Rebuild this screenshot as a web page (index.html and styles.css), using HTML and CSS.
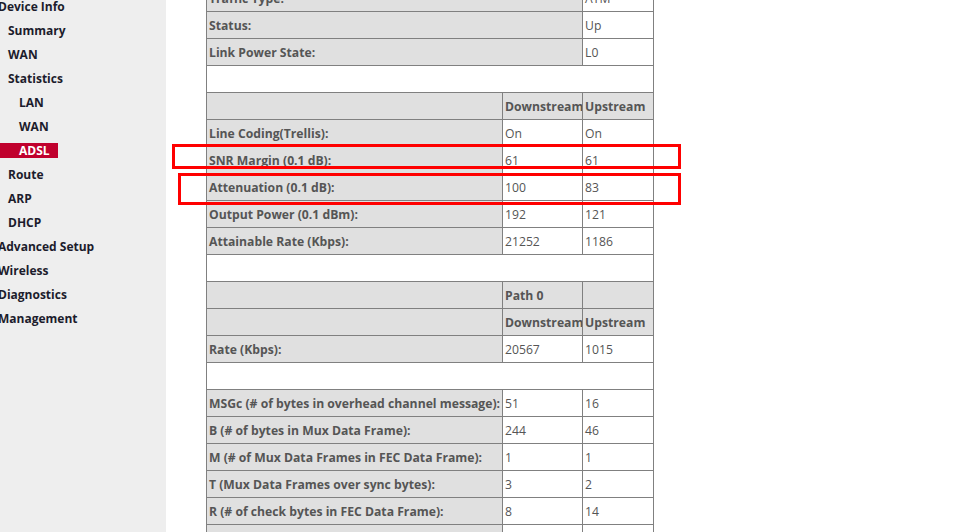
FILE: index.html
```html
<!DOCTYPE html>
<html lang="en">
<head>
  <meta charset="UTF-8">
  <title>ADSL Statistics</title>
  <link rel="stylesheet" href="styles.css">
</head>
<body>
  <div class="page">
    <div class="menu">
      <div class="m1">Device Info</div>
      <div class="m2">Summary</div>
      <div class="m2">WAN</div>
      <div class="m2">Statistics</div>
      <div class="m3">LAN</div>
      <div class="m3">WAN</div>
      <div class="m3"><span class="active">ADSL</span></div>
      <div class="m2">Route</div>
      <div class="m2">ARP</div>
      <div class="m2">DHCP</div>
      <div class="m1">Advanced Setup</div>
      <div class="m1">Wireless</div>
      <div class="m1">Diagnostics</div>
      <div class="m1">Management</div>
    </div>

    <div class="content">
      <table class="stats">
        <colgroup>
          <col class="c-label"><col class="c-down"><col class="c-up">
        </colgroup>
        <tr><td class="hd" colspan="2">Traffic Type:</td><td>ATM</td></tr>
        <tr><td class="hd" colspan="2">Status:</td><td>Up</td></tr>
        <tr><td class="hd" colspan="2">Link Power State:</td><td>L0</td></tr>
        <tr><td class="gap" colspan="3"></td></tr>
        <tr><td class="hd"></td><td class="hd">Downstream</td><td class="hd">Upstream</td></tr>
        <tr><td class="hd">Line Coding(Trellis):</td><td>On</td><td>On</td></tr>
        <tr><td class="hd">SNR Margin (0.1 dB):</td><td>61</td><td>61</td></tr>
        <tr><td class="hd">Attenuation (0.1 dB):</td><td>100</td><td>83</td></tr>
        <tr><td class="hd">Output Power (0.1 dBm):</td><td>192</td><td>121</td></tr>
        <tr><td class="hd">Attainable Rate (Kbps):</td><td>21252</td><td>1186</td></tr>
        <tr><td class="gap" colspan="3"></td></tr>
        <tr><td class="hd"></td><td class="hd">Path 0</td><td class="hd"></td></tr>
        <tr><td class="hd"></td><td class="hd">Downstream</td><td class="hd">Upstream</td></tr>
        <tr><td class="hd">Rate (Kbps):</td><td>20567</td><td>1015</td></tr>
        <tr><td class="gap" colspan="3"></td></tr>
        <tr><td class="hd">MSGc (# of bytes in overhead channel message):</td><td>51</td><td>16</td></tr>
        <tr><td class="hd">B (# of bytes in Mux Data Frame):</td><td>244</td><td>46</td></tr>
        <tr><td class="hd">M (# of Mux Data Frames in FEC Data Frame):</td><td>1</td><td>1</td></tr>
        <tr><td class="hd">T (Mux Data Frames over sync bytes):</td><td>3</td><td>2</td></tr>
        <tr><td class="hd">R (# of check bytes in FEC Data Frame):</td><td>8</td><td>14</td></tr>
        <tr><td class="hd">S (ratio of FEC over PMD Data Frame length):</td><td>0.2609</td><td>3.6923</td></tr>
      </table>
    </div>

    <div class="mark mark-snr"></div>
    <div class="mark mark-att"></div>
  </div>
</body>
</html>
```

FILE: styles.css
```css
html, body { margin: 0; padding: 0; background: #fff; overflow: hidden; }
body { font-family: "Open Sans", "Noto Sans", sans-serif; font-size: 12.2px; color: #555; }
.page { display: flex; position: relative; height: 532px; }

.menu { width: 166px; flex: none; background: #eeeeee; margin-top: -6px; padding-top: 1px; font-weight: bold; font-size: 12px; color: #1c1c2c; }
.menu div { height: 24px; line-height: 24px; white-space: nowrap; }
.m1 { margin-left: -2px; }
.m2 { padding-left: 8px; }
.m3 { padding-left: 19px; }
.m3 .active { display: inline-block; background: #c0002d; color: #fff; margin-left: -19px; padding-left: 19px; width: 39px; line-height: 15px; height: 15px; }

.content { padding-left: 40px; margin-top: -16px; }
.stats { border-collapse: collapse; width: 448px; table-layout: fixed; }
.stats col.c-label { width: 296px; }
.stats col.c-down { width: 80px; }
.stats col.c-up { width: 71px; }
.stats td { border: 1px solid #808080; height: 27px; padding: 0 0 0 2px; box-sizing: border-box; white-space: nowrap; overflow: hidden; }
.stats td.hd { background: #e0e0e0; font-weight: bold; }
.stats td.gap { background: #fff; }

.mark { position: absolute; border: 3px solid #f00; box-sizing: border-box; }
.mark-snr { left: 172px; top: 144px; width: 509px; height: 25px; }
.mark-att { left: 178px; top: 173px; width: 503px; height: 32px; }
```
